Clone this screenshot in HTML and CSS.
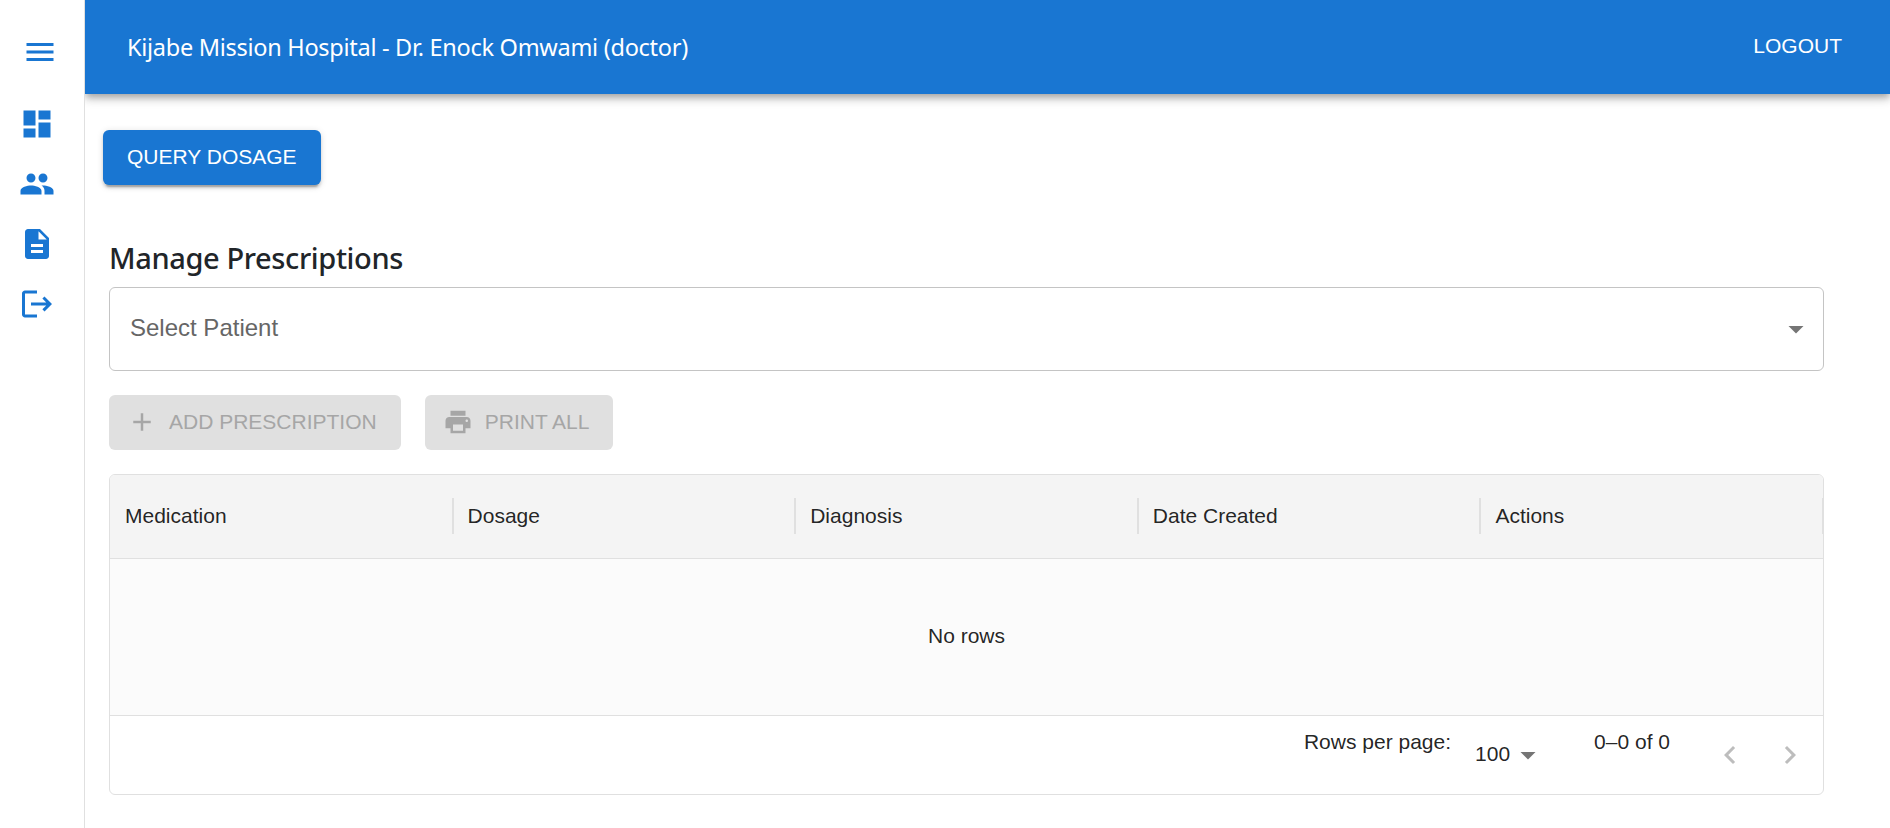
FILE: index.html
```html
<!DOCTYPE html>
<html lang="en">
<head>
<meta charset="utf-8">
<title>Manage Prescriptions</title>
<link rel="stylesheet" href="styles.css">
</head>
<body>
<div class="app">
  <nav class="sidebar">
    <a class="nav-item menu"><svg class="icon" viewBox="0 0 24 24"><path d="M3 18h18v-2H3zm0-5h18v-2H3zm0-7v2h18V6z"/></svg></a>
    <a class="nav-item"><svg class="icon" viewBox="0 0 24 24"><path d="M3 13h8V3H3zm0 8h8v-6H3zm10 0h8V11h-8zm0-18v6h8V3z"/></svg></a>
    <a class="nav-item"><svg class="icon" viewBox="0 0 24 24"><path d="M16 11c1.66 0 2.99-1.34 2.99-3S17.66 5 16 5s-3 1.34-3 3 1.34 3 3 3m-8 0c1.66 0 2.99-1.34 2.99-3S9.66 5 8 5 5 6.34 5 8s1.34 3 3 3m0 2c-2.33 0-7 1.17-7 3.500V19h14v-2.500c0-2.330-4.670-3.500-7-3.500m8 0c-.29 0-.62.02-.97.05 1.160.84 1.970 1.970 1.970 3.450V19h6v-2.500c0-2.330-4.670-3.500-7-3.500"/></svg></a>
    <a class="nav-item"><svg class="icon" viewBox="0 0 24 24"><path d="M14 2H6c-1.100 0-1.990.9-1.990 2L4 20c0 1.100.89 2 1.990 2H18c1.100 0 2-.9 2-2V8zm2 16H8v-2h8zm0-4H8v-2h8zm-3-5V3.500L18.500 9z"/></svg></a>
    <a class="nav-item"><svg class="icon" viewBox="0 0 24 24"><path d="m17 7-1.410 1.410L18.170 11H8v2h10.170l-2.580 2.580L17 17l5-5zM4 5h8V3H4c-1.100 0-2 .9-2 2v14c0 1.100.9 2 2 2h8v-2H4z"/></svg></a>
  </nav>
  <div class="page">
    <header class="appbar">
      <h1 class="appbar-title">Kijabe Mission Hospital - Dr. Enock Omwami (doctor)</h1>
      <button class="logout">LOGOUT</button>
    </header>
    <main class="content">
      <button class="btn btn-primary">QUERY DOSAGE</button>
      <section class="panel">
        <h2 class="heading">Manage Prescriptions</h2>
        <div class="select">
          <span class="select-label">Select Patient</span>
          <svg class="icon" viewBox="0 0 24 24"><path d="m7 10 5 5 5-5z"/></svg>
        </div>
        <div class="actions">
          <button class="btn btn-disabled"><svg class="btn-icon" viewBox="0 0 24 24"><path d="M19 13h-6v6h-2v-6H5v-2h6V5h2v6h6z"/></svg>ADD PRESCRIPTION</button>
          <button class="btn btn-disabled"><svg class="btn-icon" viewBox="0 0 24 24"><path d="M19 8H5c-1.660 0-3 1.340-3 3v6h4v4h12v-4h4v-6c0-1.660-1.340-3-3-3m-3 11H8v-5h8zm3-7c-.55 0-1-.45-1-1s.45-1 1-1 1 .45 1 1-.45 1-1 1m-1-9H6v4h12z"/></svg>PRINT ALL</button>
        </div>
        <div class="grid">
          <div class="grid-head">
            <div class="col">Medication</div>
            <div class="col">Dosage</div>
            <div class="col">Diagnosis</div>
            <div class="col">Date Created</div>
            <div class="col">Actions</div>
          </div>
          <div class="grid-body">No rows</div>
          <div class="grid-foot">
            <span class="foot-label">Rows per page:</span>
            <span class="page-size"><span class="page-size-value">100</span><svg class="icon" viewBox="0 0 24 24"><path d="m7 10 5 5 5-5z"/></svg></span>
            <span class="foot-range">0–0 of 0</span>
            <span class="pager">
              <svg class="icon" viewBox="0 0 24 24"><path d="M15.410 16.590 10.830 12l4.580-4.590L14 6l-6 6 6 6z"/></svg>
              <svg class="icon" viewBox="0 0 24 24"><path d="M8.590 16.590 13.170 12 8.590 7.410 10 6l6 6-6 6z"/></svg>
            </span>
          </div>
        </div>
      </section>
    </main>
  </div>
</div>
</body>
</html>
```

FILE: styles.css
```css
* { box-sizing: border-box; }

body {
  margin: 0;
  background: #fff;
  color: rgba(0, 0, 0, 0.87);
  font-family: "Liberation Sans", Arial, sans-serif;
  font-size: 21px;
}

button { border: 0; font: inherit; }

.app {
  display: flex;
  height: 828px;
  overflow: hidden;
}

.icon {
  display: block;
  flex: none;
  width: 36px;
  height: 36px;
  fill: currentColor;
}

/* Sidebar */
.sidebar {
  z-index: 1;
  flex: none;
  display: flex;
  flex-direction: column;
  gap: 24px;
  width: 85px;
  padding: 34px 0 0 19px;
  border-right: 1px solid #e0e0e0;
  background: #fff;
  color: #1976d2;
}

.menu {
  margin-bottom: 12px;
  padding-left: 3px;
}

/* Top bar */
.page {
  flex: 1;
  min-width: 0;
}

.appbar {
  display: flex;
  justify-content: space-between;
  height: 94px;
  padding: 0 48px 0 42px;
  background: #1976d2;
  color: #fff;
  box-shadow: 0 3px 6px -1.5px rgba(0, 0, 0, 0.2), 0 6px 7.5px rgba(0, 0, 0, 0.14), 0 1.5px 15px rgba(0, 0, 0, 0.12);
}

.appbar-title {
  margin: 0;
  font: 400 23.5px/94px "Noto Sans", sans-serif;
  letter-spacing: -0.28px;
  white-space: nowrap;
}

.logout {
  height: 92px;
  padding: 0;
  background: none;
  color: inherit;
}

/* Main area */
.content { padding: 36px 66px 0 18px; }

.btn {
  display: flex;
  align-items: center;
  height: 55px;
  padding: 0 24px 2px;
  border-radius: 6px;
  white-space: nowrap;
}

.btn-primary {
  background: #1976d2;
  color: #fff;
  box-shadow: 0 4.5px 1.5px -3px rgba(0, 0, 0, 0.2), 0 3px 3px rgba(0, 0, 0, 0.14), 0 1.5px 7.5px rgba(0, 0, 0, 0.12);
}

.btn-disabled {
  background: #e0e0e0;
  color: #a6a6a6;
}

.btn-icon {
  width: 30px;
  height: 30px;
  margin: 1px 12px 0 -6px;
  fill: currentColor;
}

.panel { padding: 55px 0 0 6px; }

.heading {
  margin: 0 0 11px;
  color: #212529;
  font: 500 29px/36px "Noto Sans", sans-serif;
  letter-spacing: -0.38px;
}

.select {
  display: flex;
  align-items: center;
  justify-content: space-between;
  height: 84px;
  padding: 0 9px 0 20px;
  border: 1px solid #c4c4c4;
  border-radius: 6px;
  color: #666;
  font-size: 24px;
}

.select-label { padding-bottom: 2px; }

.select .icon { color: #757575; }

.actions {
  display: flex;
  gap: 24px;
  margin: 24px 0;
}

/* Data grid */
.grid {
  overflow: hidden;
  height: 321px;
  border: 1px solid #e0e0e0;
  border-radius: 6px;
}

.grid-head {
  display: grid;
  grid-template-columns: repeat(5, 1fr);
  height: 84px;
  padding-bottom: 1px;
  border-bottom: 1px solid #e0e0e0;
  background: #f4f4f4;
}

.col {
  display: flex;
  align-items: center;
  justify-content: space-between;
  padding-left: 15px;
}

.col::after {
  content: "";
  width: 2px;
  height: 36px;
  margin-right: -1px;
  background: #e0e0e0;
}

.grid-body {
  display: flex;
  align-items: center;
  justify-content: center;
  height: 156px;
  padding-bottom: 2px;
  background: #fbfbfb;
}

.grid-foot {
  display: flex;
  align-items: flex-start;
  justify-content: flex-end;
  height: 79px;
  padding-right: 15px;
  border-top: 1px solid #e0e0e0;
}

.foot-label,
.foot-range {
  padding-top: 14px;
  line-height: 24px;
}

.page-size {
  display: flex;
  align-items: flex-start;
  margin: 20px 48px 0 24px;
  line-height: 36px;
}

.page-size .icon {
  margin-top: 1px;
  color: #757575;
}

.pager {
  display: flex;
  gap: 24px;
  margin: 21px 0 0 42px;
  color: #bdbdbd;
}
```
